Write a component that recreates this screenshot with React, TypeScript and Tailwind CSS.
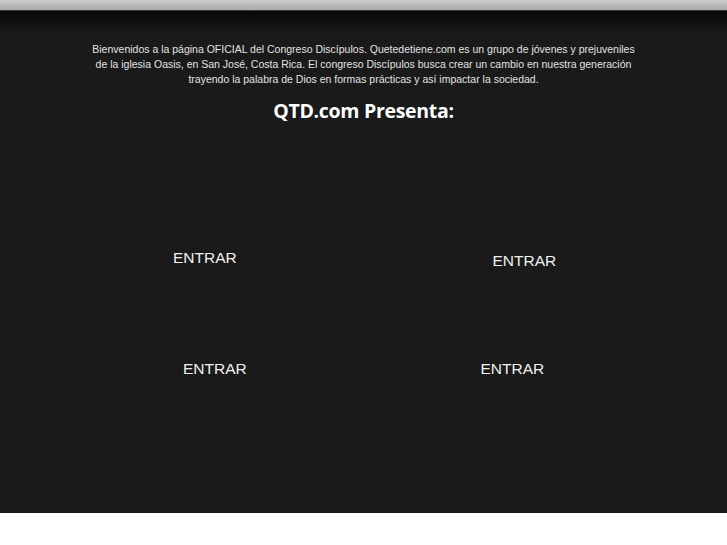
import React from 'react';

const entradas = [
  { id: 1, cls: 'pt-[125px] pl-[173px]' },
  { id: 2, cls: 'pt-[128px] pl-[129px]' },
  { id: 3, cls: 'pt-[36px] pl-[183px]' },
  { id: 4, cls: 'pt-[36px] pl-[117px]' },
];

export default function App() {
  return (
    <div className="w-[727px] h-[545px] bg-white overflow-hidden font-['Liberation_Sans',Arial,sans-serif]">
      {/* barra superior */}
      <div className="h-[10px] bg-gradient-to-b from-[#cdcdcd] to-[#a9a9a9]" />
      <div className="h-px bg-[#3a3a3a]" />

      {/* contenido */}
      <div className="relative h-[502px] bg-[#1a1a1a]">
        <div className="absolute inset-x-0 top-0 h-[22px] bg-gradient-to-b from-[#080808] to-[#1a1a1a]" />

        <div className="relative pt-[31px]">
          <p className="w-[600px] mx-auto text-center text-[10.5px] leading-[15px] text-[#e2e2e2]">
            Bienvenidos a la página OFICIAL del Congreso Discípulos. Quetedetiene.com es un grupo de jóvenes y prejuveniles
            <br />
            de la iglesia Oasis, en San José, Costa Rica. El congreso Discípulos busca crear un cambio en nuestra generación
            <br />
            trayendo la palabra de Dios en formas prácticas y así impactar la sociedad.
          </p>
          <h1 className="mt-[12px] text-center text-[19.5px] leading-[24px] font-bold text-white font-['Open_Sans',sans-serif] tracking-[-0.3px]">
            QTD.com Presenta:
          </h1>

          <div className="grid grid-cols-2 grid-rows-[200px_190px]">
            {entradas.map((e) => (
              <div key={e.id} className={`flex items-start ${e.cls}`}>
                <a className="text-[15.5px] leading-[20px] text-[#f0f0f0] cursor-pointer">ENTRAR</a>
              </div>
            ))}
          </div>
        </div>
      </div>
    </div>
  );
}
